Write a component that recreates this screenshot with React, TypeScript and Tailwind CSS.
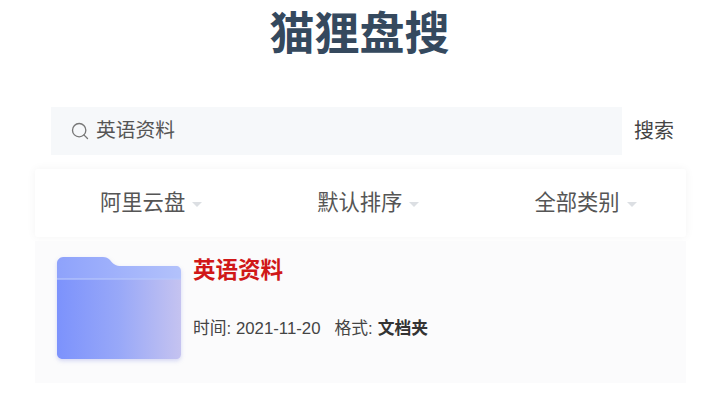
import { Search } from "lucide-react";

const cjk = "font-['Liberation_Sans','Noto_Sans_CJK_SC',sans-serif]";

function Filter({ label, className }: { label: string; className: string }) {
  return (
    <div className={`flex items-center ${className}`}>
      <span className="text-[21.3px] leading-[28px] text-[#555]">{label}</span>
      <span className="ml-[7px] mt-[2px] h-0 w-0 border-x-[5px] border-t-[5px] border-x-transparent border-t-[#dcdfe3]" />
    </div>
  );
}

function FolderIcon() {
  return (
    <svg width="124" height="102" viewBox="0 0 124 102" className="shrink-0">
      <defs>
        <linearGradient id="back" x1="0" y1="0" x2="1" y2="0">
          <stop offset="0" stopColor="#8ea2fb" />
          <stop offset="1" stopColor="#b3c2fb" />
        </linearGradient>
        <linearGradient id="front" x1="0" y1="0" x2="1" y2="0">
          <stop offset="0" stopColor="#7c92fc" />
          <stop offset="0.5" stopColor="#98a8f8" />
          <stop offset="1" stopColor="#c5c3f0" />
        </linearGradient>
      </defs>
      <path
        d="M6 0H46C49 0 51 1 53 3C56 7 59 9 64 9H119C122 9 124 11 124 14V30H0V6C0 3 3 0 6 0Z"
        fill="url(#back)"
      />
      <path d="M0 22H124V97C124 100 122 102 119 102H6C3 102 0 100 0 97Z" fill="url(#front)" />
      <rect x="0" y="21" width="124" height="2" fill="#b7c6fc" opacity="0.6" />
    </svg>
  );
}

export default function App(): React.ReactElement {
  return (
    <div className={`h-[401px] w-[708px] overflow-hidden bg-white ${cjk}`}>
      <h1 className="pl-[11px] pt-[9px] text-center text-[45px] leading-[52px] font-bold text-[#35495e]">
        猫狸盘搜
      </h1>

      <div className="mt-[46px] flex h-[48px] pl-[51px]">
        <div className="flex w-[571px] items-center bg-[#f6f8fa] pl-[19px]">
          <Search size={20} strokeWidth={1.6} className="text-[#777]" />
          <span className="ml-[6px] text-[19.8px] text-[#555]">英语资料</span>
        </div>
        <span className="ml-[12px] self-center text-[20px] text-[#444]">搜索</span>
      </div>

      <div className="ml-[35px] mt-[14px] flex h-[68px] w-[651px] items-center rounded-[3px] bg-white shadow-[0_0_10px_rgba(0,0,0,0.05)]">
        <Filter label="阿里云盘" className="ml-[65px]" />
        <Filter label="默认排序" className="ml-[115px]" />
        <Filter label="全部类别" className="ml-[115px]" />
      </div>

      <div className="ml-[35px] mt-[4px] flex h-[142px] w-[651px] bg-[#fbfbfc] pl-[22px] pt-[16px]">
        <div className="h-[102px] drop-shadow-[0_2px_2px_rgba(100,110,220,0.25)]">
          <FolderIcon />
        </div>
        <div className="ml-[12px]">
          <div className="text-[22.5px] leading-[28px] font-bold text-[#d01818]">英语资料</div>
          <div className="mt-[33px] flex items-center text-[16.8px] leading-[22px] text-[#444]">
            <span>时间: 2021-11-20</span>
            <span className="ml-[14px]">格式: </span>
            <span className="ml-[5px] font-bold text-[#333]">文档夹</span>
          </div>
        </div>
      </div>
    </div>
  );
}
